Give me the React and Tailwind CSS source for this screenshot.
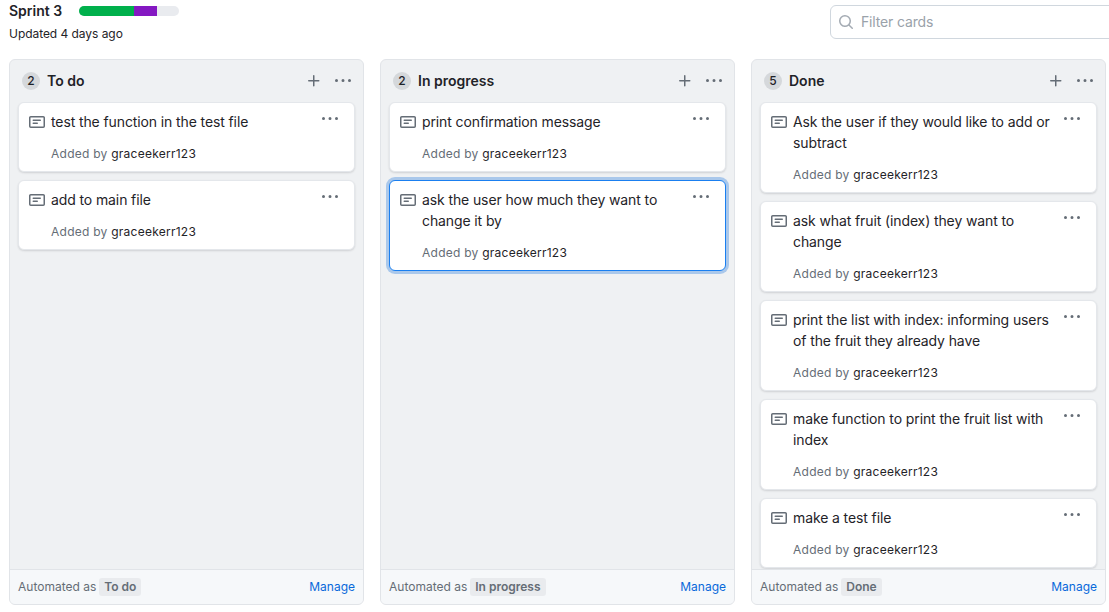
const columns = [
  {
    title: 'To do',
    cards: ['test the function in the test file', 'add to main file'],
  },
  {
    title: 'In progress',
    cards: ['print confirmation message', 'ask the user how much they want to change it by'],
    selected: 1,
  },
  {
    title: 'Done',
    cards: [
      'Ask the user if they would like to add or subtract',
      'ask what fruit (index) they want to change',
      'print the list with index: informing users of the fruit they already have',
      'make function to print the fruit list with index',
      'make a test file',
    ],
  },
]

function NoteIcon() {
  return (
    <svg viewBox="0 0 16 16" width="16" height="16" fill="currentColor" className="shrink-0 text-[#656d76]">
      <path d="M0 3.75C0 2.784.784 2 1.75 2h12.5c.966 0 1.75.784 1.75 1.75v8.5A1.75 1.75 0 0 1 14.25 14H1.75A1.75 1.75 0 0 1 0 12.25Zm1.75-.25a.25.25 0 0 0-.25.25v8.5c0 .138.112.25.25.25h12.5a.25.25 0 0 0 .25-.25v-8.5a.25.25 0 0 0-.25-.25ZM3.5 6.25a.75.75 0 0 1 .75-.75h7a.75.75 0 0 1 0 1.5h-7a.75.75 0 0 1-.75-.75Zm.75 2.25h4a.75.75 0 0 1 0 1.5h-4a.75.75 0 0 1 0-1.5Z" />
    </svg>
  )
}

function KebabIcon() {
  return (
    <svg viewBox="0 0 16 16" width="16" height="16" fill="currentColor" className="shrink-0 text-[#656d76]">
      <path d="M8 9a1.5 1.5 0 1 0 0-3 1.5 1.5 0 0 0 0 3ZM1.5 9a1.5 1.5 0 1 0 0-3 1.5 1.5 0 0 0 0 3Zm13 0a1.5 1.5 0 1 0 0-3 1.5 1.5 0 0 0 0 3Z" />
    </svg>
  )
}

function PlusIcon() {
  return (
    <svg viewBox="0 0 16 16" width="16" height="16" fill="currentColor" className="shrink-0 text-[#656d76]">
      <path d="M7.75 2a.75.75 0 0 1 .75.75V7h4.25a.75.75 0 0 1 0 1.5H8.5v4.25a.75.75 0 0 1-1.5 0V8.5H2.75a.75.75 0 0 1 0-1.5H7V2.75A.75.75 0 0 1 7.75 2Z" />
    </svg>
  )
}

function SearchIcon() {
  return (
    <svg viewBox="0 0 16 16" width="16" height="16" fill="currentColor" className="shrink-0 text-[#a4abb3]">
      <path d="M10.68 11.74a6 6 0 0 1-7.922-8.982 6 6 0 0 1 8.982 7.922l3.04 3.04a.749.749 0 0 1-.326 1.275.749.749 0 0 1-.734-.215ZM11.5 7a4.499 4.499 0 1 0-8.997 0A4.499 4.499 0 0 0 11.5 7Z" />
    </svg>
  )
}

function Card({ text, selected }) {
  return (
    <div
      className={`relative shrink-0 rounded-md bg-white pl-[10px] pr-[44px] pt-2 pb-[7px] ${
        selected
          ? 'border border-[#1a7ff0] shadow-[0_0_0_3px_rgba(9,105,218,0.3)]'
          : 'border border-[#e4e7eb] shadow-[0_1px_2px_rgba(31,35,40,0.15)]'
      }`}
    >
      <div className="flex gap-1.5">
        <div className="pt-[3px]">
          <NoteIcon />
        </div>
        <p className="text-sm leading-[21px] tracking-[-0.11px] text-[#1f2328]">{text}</p>
      </div>
      <p className="mt-3 pl-[22px] text-xs leading-[20px] tracking-[0.25px] text-[#656d76]">
        Added by <span className="text-[#1f2328]">graceekerr123</span>
      </p>
      <div className="absolute right-4 top-2">
        <KebabIcon />
      </div>
    </div>
  )
}

function Column({ title, cards, selected }) {
  return (
    <section className="flex h-[546px] w-[355px] shrink-0 flex-col overflow-hidden rounded-md border border-[#e1e4e8] bg-[#eff1f3]">
      <header className="flex h-[42px] shrink-0 items-center pl-3 pr-3">
        <span className="flex h-[18px] w-[18px] items-center justify-center rounded-full bg-[#d5d8db] text-xs font-medium text-[#1f2328]">
          {cards.length}
        </span>
        <h2 className="ml-[7px] text-sm font-semibold text-[#1f2328]">{title}</h2>
        <div className="ml-auto flex items-center gap-[13px]">
          <PlusIcon />
          <KebabIcon />
        </div>
      </header>
      <div className="flex min-h-0 flex-1 flex-col gap-2 overflow-hidden px-2">
        {cards.map((text, i) => (
          <Card key={text} text={text} selected={selected === i} />
        ))}
      </div>
      <footer className="flex h-[35px] shrink-0 items-center border-t border-[#e1e4e8] bg-[#f6f8fa] pl-2 pr-2 text-xs text-[#656d76]">
        <span>Automated as</span>
        <span className="ml-[3px] rounded-[3px] bg-[#e9ebee] px-[5px] py-px font-semibold">{title}</span>
        <a href="#" className="ml-auto text-[#0969da]">
          Manage
        </a>
      </footer>
    </section>
  )
}

export default function App() {
  return (
    <div className="h-[612px] w-[1109px] overflow-hidden bg-white font-['Inter',sans-serif]">
      <div className="flex h-[59px] justify-between pl-[9px]">
        <div>
          <div className="flex items-center pt-px">
            <h1 className="text-sm leading-[20px] font-semibold text-[#1f2328]">Sprint 3</h1>
            <div className="ml-[17px] flex h-[10px] w-[100px] overflow-hidden rounded-full bg-[#e9ebef]">
              <div className="w-[55px] bg-[#00b04c]" />
              <div className="w-[23px] bg-[#8418c2]" />
            </div>
          </div>
          <p className="mt-[3px] text-xs leading-[20px] tracking-[-0.05px] text-[#1f2328]">Updated 4 days ago</p>
        </div>
        <div className="mt-[5px] flex h-[34px] w-[290px] shrink-0 translate-x-[11px] items-center gap-[7px] rounded-md border border-[#d0d7de] pl-[7px] text-sm tracking-[-0.15px] text-[#9aa2aa]">
          <SearchIcon />
          <span>Filter cards</span>
        </div>
      </div>
      <div className="flex gap-4 pl-[9px]">
        {columns.map((c) => (
          <Column key={c.title} {...c} />
        ))}
      </div>
    </div>
  )
}
